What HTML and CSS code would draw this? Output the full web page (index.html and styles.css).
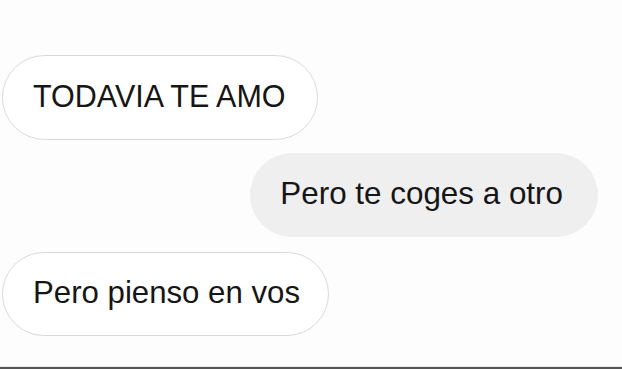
FILE: index.html
```html
<!DOCTYPE html>
<html lang="es">
<head>
    <meta charset="UTF-8">
    <meta name="viewport" content="width=device-width, initial-scale=1.0">
    <title>Chat</title>
    <link rel="stylesheet" href="styles.css">
</head>
<body>
    <div class="chat">
        <div class="msg msg-in">TODAVIA TE AMO</div>
        <div class="msg msg-out">Pero te coges a otro</div>
        <div class="msg msg-in msg-last">Pero pienso en vos</div>
    </div>
    <div class="bottom-bar"></div>
</body>
</html>
```

FILE: styles.css
```css
/* Базовые настройки */
html, body {
    margin: 0;
    padding: 0;
    height: 100%;
}

body {
    display: flex;
    flex-direction: column;
    background: #fdfdfd;
    font-family: "Liberation Sans", Arial, sans-serif;
    color: #161616;
    overflow: hidden;
}

/* Переписка */
.chat {
    flex: 1;
    display: flex;
    flex-direction: column;
    padding: 55px 24px 0 2px;
}

.msg {
    box-sizing: border-box;
    height: 85px;
    display: flex;
    align-items: center;
    padding: 0 31px 2px 30px;
    font-size: 30.5px;
    border-radius: 43px;
    white-space: nowrap;
}

.msg-in {
    align-self: flex-start;
    background: #fff;
    border: 1.5px solid #dadada;
}

.msg-out {
    align-self: flex-end;
    background: #efefef;
    margin: 13px 0 15px;
    height: 84px;
    padding: 0 35px 2px 30px;
    font-size: 31.4px;
}

.msg-last {
    height: 84px;
    padding-right: 28px;
    font-size: 31.2px;
}

/* Нижняя полоса */
.bottom-bar {
    height: 2px;
    border-top: 1px solid #ececec;
    background: #555;
}
```
